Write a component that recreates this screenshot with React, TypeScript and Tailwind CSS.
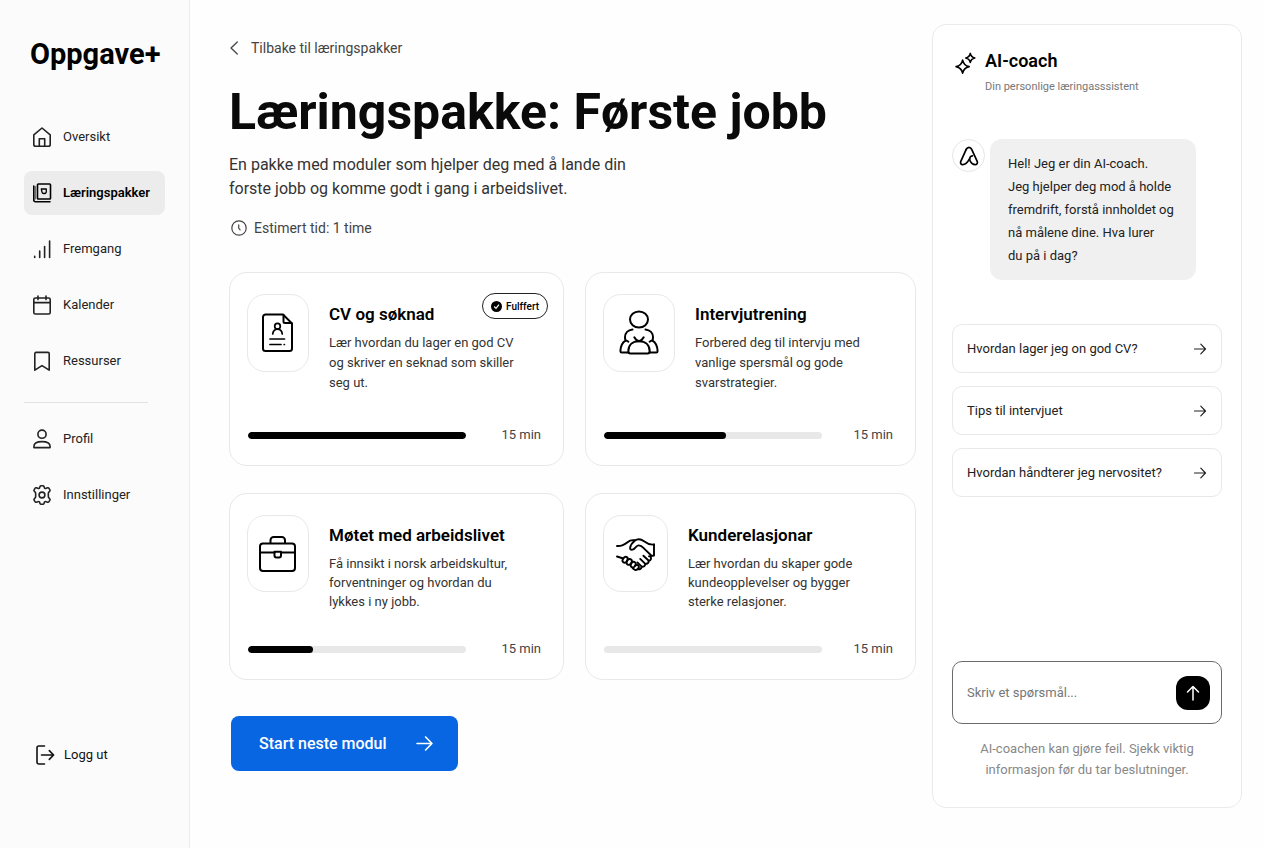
import { useState } from "react";
import type { ReactNode } from "react";

type IconProps = { className?: string; strokeWidth?: number; children: ReactNode; size?: number; box?: number };

function Icon({ children, className, strokeWidth = 1.6, size = 24, box = 24 }: IconProps) {
  return (
    <svg
      width={size}
      height={size}
      viewBox={`0 0 ${box} ${box}`}
      fill="none"
      stroke="currentColor"
      strokeWidth={strokeWidth}
      strokeLinecap="round"
      strokeLinejoin="round"
      className={`shrink-0 ${className ?? ""}`}
      aria-hidden="true"
    >
      {children}
    </svg>
  );
}

function ArrowRight({ size = 14, strokeWidth = 1.2 }: { size?: number; strokeWidth?: number }) {
  return (
    <Icon size={size} box={14} strokeWidth={strokeWidth}>
      <path d="M1.5 7h11M7.8 2.2 12.5 7l-4.7 4.8" />
    </Icon>
  );
}

const mainNav = [
  {
    label: "Oversikt",
    icon: (
      <Icon>
        <path d="M3.8 9.8 12 3l8.2 6.8v9.6a1.8 1.8 0 0 1-1.8 1.8H5.6a1.8 1.8 0 0 1-1.8-1.8z" />
        <path d="M9.3 21v-7.2h5.4V21" />
      </Icon>
    ),
  },
  {
    label: "Læringspakker",
    active: true,
    icon: (
      <Icon>
        <rect x="7.500" y="3" width="13" height="15" rx="0.8" />
        <path d="M3.800 5v14.200a1.500 1.500 0 0 0 1.500 1.500H20" />
        <path d="M5.600 5.500V18" strokeWidth="0.600" />
        <path d="M11.300 8h5v2.600a1.900 1.900 0 0 1-1.900 1.900h-.8a2 2 0 0 1-1.700-1.800z" strokeWidth="1.300" />
      </Icon>
    ),
  },
  {
    label: "Fremgang",
    icon: (
      <Icon>
        <path d="M4.7 19.3v1.2M9.7 14v6.5M14.6 9.6v10.9M19.6 4v16.5" />
      </Icon>
    ),
  },
  {
    label: "Kalender",
    icon: (
      <Icon>
        <rect x="3.8" y="5" width="16.4" height="16" rx="1.6" />
        <path d="M3.8 9.6h16.4M8 3v3.6M16 3v3.6" />
      </Icon>
    ),
  },
  {
    label: "Ressurser",
    icon: (
      <Icon>
        <path d="M4.8 4.6c0-.7.5-1.2 1.2-1.2h12c.7 0 1.2.5 1.2 1.2v16.6L12 16.6l-7.2 4.6z" />
      </Icon>
    ),
  },
];

const userNav = [
  {
    label: "Profil",
    icon: (
      <Icon>
        <circle cx="12" cy="7.2" r="4.1" />
        <path d="M3.9 20.6v-1.1c0-3.1 3-4.9 8.1-4.9s8.1 1.8 8.1 4.9v1.1z" />
      </Icon>
    ),
  },
  {
    label: "Innstillinger",
    icon: (
      <Icon>
        <circle cx="12" cy="12" r="2.900" />
        <path d="M10 3.600c.2-.6.6-.9 1.200-.9h1.600c.6 0 1 .3 1.200.9l.5 1.500c.7.500 1 .5 1.700.2l1.400-.5c.6-.2 1.100 0 1.400.5l.9 1.500c.3.500.2 1.100-.2 1.500l-1.100 1.100c-.4.700-.4 4.500 0 5.200l1.100 1.100c.4.400.5 1 .2 1.500l-.9 1.500c-.3.500-.8.700-1.400.5l-1.400-.5c-.7-.3-1-.3-1.700.2l-.5 1.500c-.2.600-.6.900-1.200.9h-1.600c-.6 0-1-.3-1.200-.9l-.5-1.500c-.7-.5-1-.5-1.700-.2l-1.400.5c-.6.2-1.100 0-1.400-.5l-.9-1.500c-.3-.5-.2-1.100.2-1.500l1.100-1.100c.4-.7.4-4.500 0-5.200L4.300 8.300c-.4-.4-.5-1-.2-1.500L5 5.300c.3-.5.8-.7 1.400-.5l1.400.5c.7.300 1 .3 1.700-.2z" />
      </Icon>
    ),
  },
];

const modules = [
  {
    title: "CV og søknad",
    body: "Lær hvordan du lager en god CV og skriver en seknad som skiller seg ut.",
    progress: 100,
    done: true,
    tile: "w-[62px] h-[78px]",
    leading: "leading-5",
    icon: (
      <Icon size={44} box={44} strokeWidth={2}>
        <path d="M9.500 3.500h17.500l9 9V37.500a2.500 2.500 0 0 1-2.500 2.500h-24A2.500 2.500 0 0 1 7 37.500V6a2.500 2.500 0 0 1 2.500-2.500z" />
        <path d="M27.500 4v6.500a1.500 1.500 0 0 0 1.500 1.500h6.500" />
        <circle cx="21.500" cy="15.200" r="2.800" strokeWidth="1.700" />
        <path d="M16.700 23c.5-3.200 2.200-4.800 4.800-4.800s4.300 1.600 4.800 4.800" strokeWidth="1.700" />
        <path d="M14 28h14.500M14 33.500h11M28.200 33.500h.2" strokeWidth="1.700" />
      </Icon>
    ),
  },
  {
    title: "Intervjutrening",
    body: "Forbered deg til intervju med vanlige spersmål og gode svarstrategier.",
    progress: 56,
    tile: "w-[72px] h-[78px]",
    leading: "leading-5",
    icon: (
      <Icon size={46} box={46} strokeWidth={2}>
        <ellipse cx="23" cy="9.500" rx="9" ry="8" />
        <path d="M16.500 19.500c-4.500.5-7.500 3.600-7.500 7.800 0 1.300.2 2.300.6 3.300C6.300 32.500 4.600 35.800 4.400 41c0 1 .4 1.500 1.400 1.500h7" />
        <path d="M29.500 19.500c4.500.5 7.500 3.600 7.500 7.800 0 1.300-.2 2.300-.6 3.300 3.300 1.900 5 5.200 5.200 10.400 0 1-.4 1.500-1.400 1.500h-7" />
        <path d="M9.600 30.600c1 .1 2 .5 2.800 1.100M36.400 30.600c-1 .1-2 .5-2.800 1.100" />
        <path d="M18.300 27.300c1 2.100 2.400 3.300 4.700 4 2.300-.7 3.700-1.900 4.700-4" />
        <path d="M12.300 41.500c0-6.300 4-10.200 10.700-10.200s10.700 3.900 10.700 10.200c0 1.300-.7 1.900-2 1.900H14.300c-1.300 0-2-.6-2-1.900z" />
      </Icon>
    ),
  },
  {
    title: "Møtet med arbeidslivet",
    body: "Få innsikt i norsk arbeidskultur, forventninger og hvordan du lykkes i ny jobb.",
    progress: 30,
    tile: "w-[62px] h-[77px]",
    leading: "leading-[19px]",
    icon: (
      <Icon size={44} box={44} strokeWidth={2}>
        <rect x="4" y="11.500" width="35" height="27.500" rx="3" />
        <path d="M14.500 11V8.200A3.200 3.200 0 0 1 17.700 5h8.100A3.200 3.200 0 0 1 29 8.200V11" />
        <path d="M4 20.500h14.500M25 20.500h14" />
        <path d="M18.500 19.800H25v3.700a2 2 0 0 1-2 2h-2.500a2 2 0 0 1-2-2z" />
      </Icon>
    ),
  },
  {
    title: "Kunderelasjonar",
    body: "Lær hvordan du skaper gode kundeopplevelser og bygger sterke relasjoner.",
    progress: 0,
    tile: "w-[65px] h-[77px]",
    leading: "leading-[19px]",
    icon: (
      <Icon size={42} box={42} strokeWidth={1.900}>
        <path d="M2 13c4.500.3 7.500-1.300 10.500-3.800 2-1.700 4.500-2.400 7.500-1.900" />
        <path d="M39 11.500c-4.500.5-7-.8-10-3.200-2.800-2.200-6.600-2.600-9.300-.6-2.300 1.800-4.200 4.500-4.600 7.200-.2 1.500.9 2.200 2.300 1.800 2.700-.7 3.400-4 6.100-4.300 3-.3 4.500 2.100 6.700 4.200l5.800 5.600" />
        <path d="M39 11.500v11l-5 .9" />
        <path d="M2 23.500l6.300 2" />
        <path d="M8.300 25.500c1-1.800 2.400-2.200 3.600-1.400s1.200 2 .2 3.600l-1 1.400c-1 .9-2.400.8-3.200-.2s-.5-2.200.4-3.400z" />
        <path d="M12.400 27.300c1.200-1.500 2.600-1.700 3.700-.8s1.100 2.200.1 3.500l-1 1.300c-1 .9-2.400.8-3.200-.2-.8-.9-.6-2 .4-3.800z" />
        <path d="M16.700 29.800c1.100-1.200 2.400-1.300 3.400-.4s1 2 .1 3.200l-1 1.300c-1 .9-2.300.8-3.100-.2-.8-.9-.5-2.300.6-3.900z" />
        <path d="M20.500 32.500c1-1 2.300-.7 3 .2.800 1.200.3 2.500-1 3.600-1 .9-2.400.9-3.500-.1l-1.300-1" />
        <path d="M23 36.200c1.700.5 3.300-.5 3.700-2.500 2 .3 3.400-.8 3.600-2.800 2 0 3.500-1.300 3.500-3.200 2.200-.4 3-2.500 1.500-4.300M26.700 33.700l-4.300-4.300M30.300 30.900l-5.100-5M33.800 27.700l-5.400-5" />
      </Icon>
    ),
  },
];

const suggestions = ["Hvordan lager jeg on god CV?", "Tips til intervjuet", "Hvordan håndterer jeg nervositet?"];

const greeting = [
  "Hel! Jeg er din AI-coach.",
  "Jeg hjelper deg mod å holde",
  "fremdrift, forstå innholdet og",
  "nå målene dine. Hva lurer",
  "du på i dag?",
].join("\n");

function NavItem({ label, icon, active }: { label: string; icon: ReactNode; active?: boolean }) {
  return (
    <a
      href="#"
      aria-current={active ? "page" : undefined}
      className={`flex h-11 items-center gap-[9px] rounded-lg pl-1.5 text-[13px] ${
        active ? "bg-[#ececec] font-semibold text-black" : "text-[#222] hover:bg-neutral-100"
      }`}
    >
      {icon}
      {label}
    </a>
  );
}

function Sidebar() {
  return (
    <aside className="flex w-[190px] shrink-0 flex-col border-r border-[#ebebeb] bg-[#fbfbfb] px-6 pt-9 pb-[71px]">
      <p className="pl-1.5 text-[29px] leading-9 font-bold text-black">Oppgave+</p>
      <nav className="mt-[43px] flex flex-col gap-3">
        {mainNav.map((item) => (
          <NavItem key={item.label} {...item} />
        ))}
        <hr className="mt-[7px] mr-[17px] mb-0.5 border-[#e2e2e2]" />
        {userNav.map((item) => (
          <NavItem key={item.label} {...item} />
        ))}
      </nav>
      <button type="button" className="mt-auto flex h-11 items-center gap-2 pl-2 text-[13px] text-[#111]">
        <Icon>
          <path d="M12.500 3H6.800A1.800 1.800 0 0 0 5 4.800v14.400A1.800 1.800 0 0 0 6.800 21h5.700" />
          <path d="M9.500 12h12M17.300 7.600l4.300 4.400-4.300 4.400" />
        </Icon>
        Logg ut
      </button>
    </aside>
  );
}

function ModuleCard({ title, body, progress, done, tile, leading, icon }: (typeof modules)[number]) {
  return (
    <article className="relative flex flex-col rounded-[18px] border border-[#e8e8e8] bg-white px-[17px] pt-[21px] pb-5">
      {done && (
        <span className="absolute top-5 right-[15px] flex h-[26px] items-center gap-1 rounded-full border border-[#222] bg-white px-2 text-[10px] font-medium text-black">
          <svg width="11" height="11" viewBox="0 0 11 11" aria-hidden="true">
            <circle cx="5.500" cy="5.500" r="5.500" fill="#000" />
            <path d="M3.200 5.500 5 7.300l3-3.600" fill="none" stroke="#fff" strokeWidth="1.200" />
          </svg>
          Fulffert
        </span>
      )}
      <div className="flex gap-5">
        <div
          className={`flex shrink-0 items-center justify-center rounded-[18px] border border-[#e8e8e8] text-black ${tile}`}
        >
          {icon}
        </div>
        <div className="pt-2">
          <h2 className="text-[17px] leading-6 font-semibold text-black">{title}</h2>
          <p className={`mt-[7px] max-w-[190px] text-[13px] text-[#333] ${leading}`}>{body}</p>
        </div>
      </div>
      <div className="mt-auto flex items-center justify-between gap-4 pr-[5px] pl-px">
        <div
          role="progressbar"
          aria-label={title}
          aria-valuenow={progress}
          className="h-[7px] w-[218px] overflow-hidden rounded-full bg-[#e8e8e8]"
        >
          <div className="h-full rounded-full bg-black" style={{ width: `${progress}%` }} />
        </div>
        <span className="text-[13px] leading-5 text-[#444]">15 min</span>
      </div>
    </article>
  );
}

function CoachPanel() {
  const [question, setQuestion] = useState("");

  return (
    <aside className="mt-6 mr-[22px] mb-10 flex w-[310px] shrink-0 flex-col rounded-[14px] border border-[#ebebeb] bg-white px-[19px] pb-[27px]">
      <header className="mt-6 flex gap-2 pl-0.5">
        <Icon size={23} className="mt-[3px]" strokeWidth={1.700}>
          <path d="M9 8.500c.9 4.300 2.500 5.900 6.800 6.800-4.300.9-5.900 2.500-6.800 6.800-.9-4.300-2.500-5.900-6.800-6.800C6.500 14.400 8.100 12.800 9 8.500z" />
          <path d="M17 1.500c.6 3 1.700 4.100 4.700 4.700-3 .6-4.100 1.700-4.700 4.700-.6-3-1.700-4.100-4.700-4.700 3-.6 4.100-1.700 4.700-4.700z" />
        </Icon>
        <div>
          <h2 className="text-[18px] leading-6 font-semibold text-black">AI-coach</h2>
          <p className="mt-1.5 text-[11px] leading-4 text-[#777]">Din personlige læringasssistent</p>
        </div>
      </header>

      <div className="mt-11 flex items-start gap-[5px]">
        <span className="flex size-[33px] shrink-0 items-center justify-center rounded-full border border-[#e5e5e5] text-black">
          <Icon size={20} box={20} strokeWidth={1.700}>
            <path d="M7.200 3.400C7.900 1.900 8.900 1.300 10 1.300s2 .6 2.700 2.100l5.500 12c.8 1.900-.4 3.200-2.200 3.200-2 0-3.500-1.100-4.700-3.200-.9-1.600-.9-3.100-.1-4.400.5-.7 1.200-1.100 2.200-1.200" />
            <path d="M7.200 3.400 1.800 15.400c-.8 1.900.3 3.200 2 3.200 2.700 0 4.600-2 6.700-5.800" />
          </Icon>
        </span>
        <p className="w-[206px] rounded-xl bg-[#f0f0f0] px-[18px] py-[13px] text-[13px] leading-[23px] whitespace-pre-line text-[#222]">
          {greeting}
        </p>
      </div>

      <div className="mt-11 flex flex-col gap-[13px]">
        {suggestions.map((text) => (
          <button
            key={text}
            type="button"
            onClick={() => setQuestion(text)}
            className="flex h-[49px] items-center justify-between rounded-[10px] border border-[#e8e8e8] px-3.5 text-[13px] text-[#222]"
          >
            {text}
            <ArrowRight />
          </button>
        ))}
      </div>

      <form
        className="mt-auto flex h-[63px] items-center rounded-[10px] border border-[#6b6b6b] pr-[11px] pl-3.5"
        onSubmit={(e) => e.preventDefault()}
      >
        <input
          type="text"
          aria-label="Skriv et spørsmål"
          placeholder="Skriv et spørsmål..."
          value={question}
          onChange={(e) => setQuestion(e.target.value)}
          className="min-w-0 flex-1 bg-transparent text-[13px] text-[#222] outline-none placeholder:text-[#777]"
        />
        <button
          type="submit"
          aria-label="Send"
          className="flex size-[34px] items-center justify-center rounded-xl bg-black text-white"
        >
          <Icon size={18} box={18} strokeWidth={1.500}>
            <path d="M9 16V2.500M3.500 8 9 2.500 14.500 8" />
          </Icon>
        </button>
      </form>
      <p className="mt-3.5 px-5 text-center text-[13px] leading-[21px] text-[#888]">
        AI-coachen kan gjøre feil. Sjekk viktig informasjon før du tar beslutninger.
      </p>
    </aside>
  );
}

export default function App() {
  return (
    <div className="flex min-h-screen bg-[#fefefe] font-[Roboto,Inter,sans-serif]">
      <Sidebar />
      <main className="min-w-0 flex-1 pt-[38px] pr-4 pb-10 pl-[39px]">
        <a href="#" className="flex w-fit items-center gap-3 text-[14px] leading-5 text-[#444]">
          <svg
            width="10"
            height="14"
            viewBox="0 0 10 14"
            fill="none"
            stroke="currentColor"
            strokeWidth="1.300"
            strokeLinecap="round"
            strokeLinejoin="round"
            aria-hidden="true"
          >
            <path d="M8.300 1 2 7l6.300 6" />
          </svg>
          Tilbake til læringspakker
        </a>
        <h1 className="mt-6 text-[50px] leading-[60px] font-bold text-[#0a0a0a]">Læringspakke: Første jobb</h1>
        <p className="mt-[11px] max-w-[410px] text-[16px] leading-6 text-[#333]">
          En pakke med moduler som hjelper deg med å lande din forste jobb og komme godt i gang i arbeidslivet.
        </p>
        <p className="mt-[17px] flex items-center gap-[7px] pl-0.5 text-[14px] leading-5 text-[#444]">
          <Icon size={16} box={16} strokeWidth={1.200}>
            <circle cx="8" cy="8" r="7.200" />
            <path d="M7.700 4.800v3.400l1.400 1.600" />
          </Icon>
          Estimert tid: 1 time
        </p>

        <section className="mt-[34px] grid grid-cols-[335fr_331fr] grid-rows-[194px_187px] gap-x-[21px] gap-y-[27px]">
          {modules.map((m) => (
            <ModuleCard key={m.title} {...m} />
          ))}
        </section>

        <button
          type="button"
          className="mt-9 ml-0.5 flex h-[55px] items-center gap-7 rounded-lg bg-[#0866e2] pr-6 pl-7 text-[16px] font-medium text-white"
        >
          Start neste modul
          <ArrowRight size={19} />
        </button>
      </main>
      <CoachPanel />
    </div>
  );
}
